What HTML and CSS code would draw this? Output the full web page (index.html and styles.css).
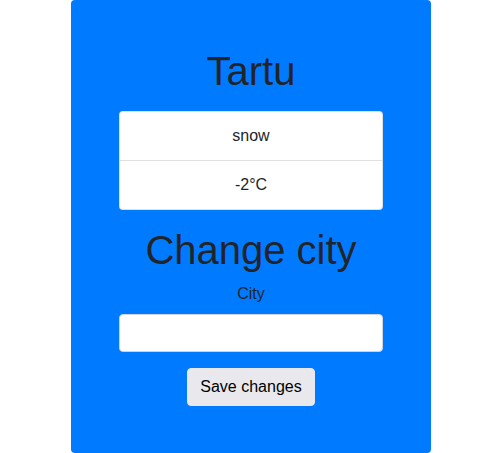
FILE: index.html
```html
<!DOCTYPE html>
<html lang="en">
<head>
<meta charset="utf-8">
<meta name="viewport" content="width=device-width, initial-scale=1">
<title>Weather</title>
<link rel="stylesheet" href="styles.css">
</head>
<body>
<main class="card">
  <h1 class="title">Tartu</h1>
  <ul class="list">
    <li class="list-item">snow</li>
    <li class="list-item">-2°C</li>
  </ul>
  <h1 class="title">Change city</h1>
  <form class="form">
    <label class="label" for="city">City</label>
    <input class="input" id="city" type="text">
    <button class="button" type="button">Save changes</button>
  </form>
</main>
</body>
</html>
```

FILE: styles.css
```css
*,
*::before,
*::after {
  box-sizing: border-box;
}

body {
  margin: 0;
  padding: 0 64px 0 71px;
  background: #fff;
  color: #212529;
  font-family: "Liberation Sans", Arial, sans-serif;
  font-size: 16px;
  line-height: 24px;
}

.card {
  max-width: 480px;
  margin: 0 auto;
  padding: 47px 48px;
  border-radius: 4px;
  background: #007bff;
  text-align: center;
}

.title {
  margin: 0 0 8px;
  font-size: 40px;
  font-weight: 500;
  line-height: 48px;
}

.list {
  margin: 16px 0;
  padding: 0;
  list-style: none;
}

.list-item {
  padding: 12px 20px;
  border: 1px solid rgba(0, 0, 0, 0.125);
  background: #fff;
  background-clip: border-box;
}

.list-item:first-child {
  border-radius: 4px 4px 0 0;
}

.list-item:last-child {
  border-top: 0;
  border-radius: 0 0 4px 4px;
}

.label {
  display: block;
  margin-bottom: 8px;
}

.input {
  display: block;
  width: 100%;
  height: 38px;
  margin-bottom: 16px;
  padding: 6px 12px;
  border: 1px solid #ced4da;
  border-radius: 4px;
  background: #fff;
  color: #495057;
  font: inherit;
}

.button {
  padding: 6px 12px;
  border: 1px solid #e9e9ed;
  border-radius: 4px;
  background: #e9e9ed;
  color: #000;
  font: inherit;
}
```
